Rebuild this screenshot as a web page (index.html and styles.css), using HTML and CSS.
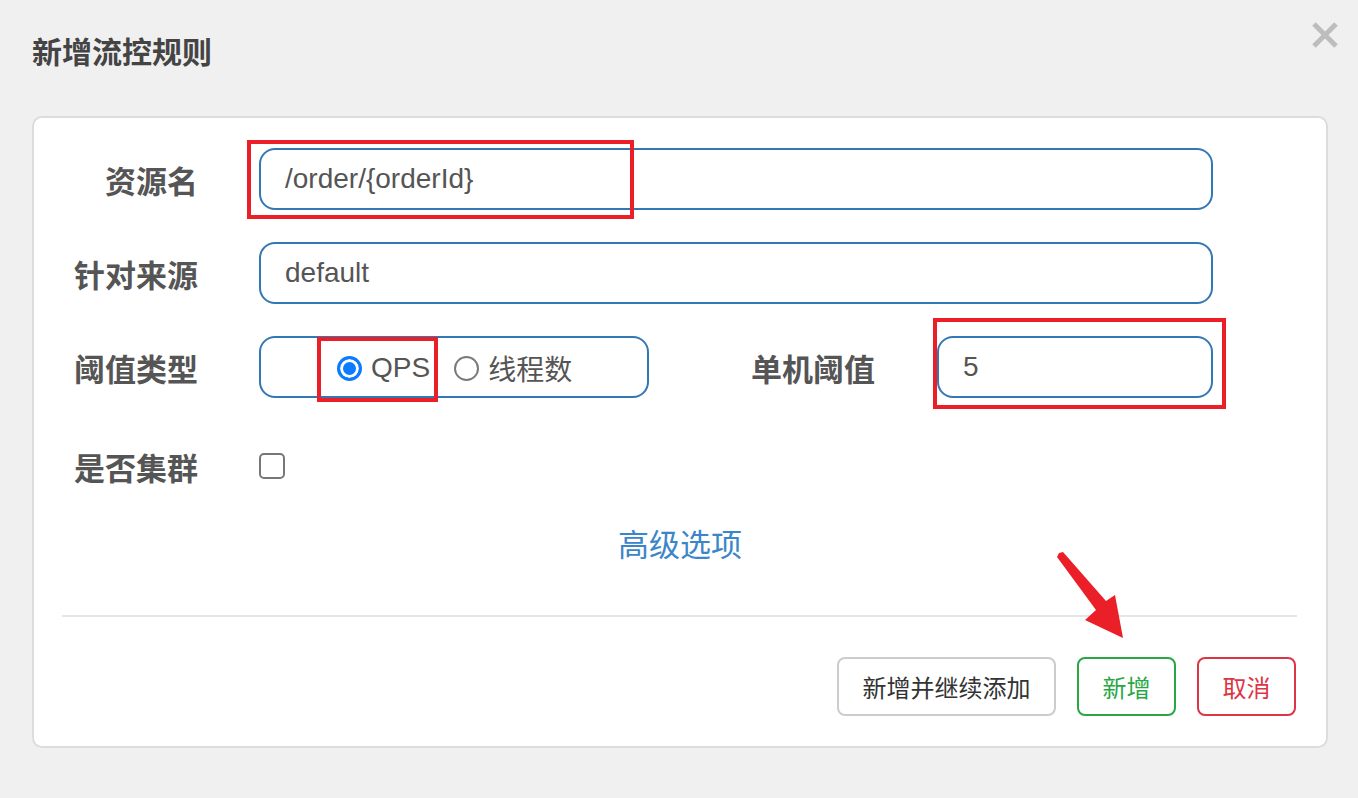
FILE: index.html
```html
<!DOCTYPE html>
<html lang="zh-CN">
<head>
<meta charset="UTF-8" />
<title>新增流控规则</title>
<link rel="stylesheet" href="styles.css">
</head>
<body>

<div class="modal">
  <div class="modal-header">
    <h2 class="modal-title">新增流控规则</h2>
    <span class="close" aria-label="关闭">
      <svg width="28" height="28" viewBox="0 0 28 28">
        <path d="M3 3 L25 25 M25 3 L3 25" stroke="#bdbdbd" stroke-width="5" fill="none"/>
      </svg>
    </span>
  </div>

  <div class="card">
    <div class="form">
      <div class="row">
        <label class="label">资源名</label>
        <div class="input">/order/{orderId}</div>
      </div>
      <div class="row">
        <label class="label">针对来源</label>
        <div class="input">default</div>
      </div>
      <div class="row row-type">
        <label class="label">阈值类型</label>
        <div class="radio-box">
          <span class="radio checked"></span><span class="radio-text">QPS</span>
          <span class="radio"></span><span class="radio-text">线程数</span>
        </div>
        <label class="label label-2">单机阈值</label>
        <div class="input input-small">5</div>
      </div>
      <div class="row row-check">
        <label class="label">是否集群</label>
        <span class="checkbox"></span>
      </div>
      <div class="advanced">高级选项</div>
    </div>

    <div class="divider"></div>

    <div class="footer">
      <button class="btn btn-default">新增并继续添加</button>
      <button class="btn btn-success">新增</button>
      <button class="btn btn-danger">取消</button>
    </div>

    <!-- annotations -->
    <div class="mark mark-1"></div>
    <div class="mark mark-2"></div>
    <div class="mark mark-3"></div>
  </div>
</div>

<svg class="arrow" width="1358" height="798" viewBox="0 0 1358 798">
  <polygon points="1059,553 1063,552 1106,601 1115,595 1123,638 1085,620 1096,610 1057,557" fill="#ea1f28"/>
</svg>

</body>
</html>
```

FILE: styles.css
```css
body {
  margin: 0;
  background: #f0f0f0;
  font-family: "Noto Sans CJK SC", "Liberation Sans", sans-serif;
  color: #555;
}
.modal {
  width: 1358px;
  height: 798px;
}
/* En-tête */
.modal-header {
  display: flex;
  justify-content: space-between;
  align-items: flex-start;
  padding: 28px 19px 0 32px;
  height: 88px;
}
.modal-title {
  margin: 0;
  font-size: 30px;
  line-height: 44px;
  font-weight: bold;
  color: #444;
}
.close {
  margin-top: -7px;
  width: 28px;
  height: 28px;
}
/* Carte */
.card {
  position: relative;
  margin: 0 30px 0 32px;
  background: #fff;
  border: 2px solid #dcdcdc;
  border-radius: 10px;
  height: 628px;
}
.form {
  padding-top: 30px;
}
.row {
  display: flex;
  align-items: center;
  height: 62px;
  margin-bottom: 32px;
}
.label {
  width: 164px;
  margin-right: 61px;
  text-align: right;
  font-size: 31px;
  font-weight: bold;
  color: #555;
}
.input {
  box-sizing: border-box;
  width: 954px;
  height: 62px;
  border: 2px solid #3477b5;
  border-radius: 16px;
  padding-left: 24px;
  font-family: "Liberation Sans", Arial, sans-serif;
  font-size: 28px;
  line-height: 58px;
  color: #555;
}
.row-type {
  margin-bottom: 37px;
}
.radio-box {
  box-sizing: border-box;
  display: flex;
  align-items: center;
  width: 390px;
  height: 62px;
  border: 2px solid #3477b5;
  border-radius: 16px;
  padding-left: 76px;
  padding-top: 2px;
}
.radio {
  box-sizing: border-box;
  width: 25px;
  height: 25px;
  border: 2px solid #7a7a7a;
  border-radius: 50%;
  margin-right: 9px;
}
.radio.checked {
  border: 3px solid #0b7bff;
  background: #0b7bff;
  box-shadow: inset 0 0 0 3px #fff;
}
.radio-text {
  font-size: 28px;
  color: #555;
  margin-right: 24px;
  font-family: "Liberation Sans", "Noto Sans CJK SC", sans-serif;
}
.label-2 {
  width: 226px;
  margin-right: 62px;
}
.input-small {
  width: 276px;
}
.row-check {
  margin-bottom: 26px;
}
.checkbox {
  box-sizing: border-box;
  width: 26px;
  height: 26px;
  border: 2px solid #777;
  border-radius: 5px;
}
.advanced {
  text-align: center;
  font-size: 31px;
  line-height: 40px;
  color: #3a86c8;
}
.divider {
  height: 2px;
  background: #e6e6e6;
  margin: 52px 29px 0 28px;
}
.footer {
  display: flex;
  justify-content: flex-end;
  gap: 21px;
  padding: 40px 30px 0 0;
}
.btn {
  box-sizing: border-box;
  height: 59px;
  padding: 0;
  white-space: nowrap;
  text-align: center;
  background: #fff;
  border: 2px solid #ccc;
  border-radius: 8px;
  font-family: "Noto Sans CJK SC", sans-serif;
  font-size: 24px;
  color: #333;
}
.btn-default {
  width: 219px;
}
.btn-success {
  width: 99px;
  border-color: #28a745;
  color: #28a745;
}
.btn-danger {
  width: 99px;
  border-color: #dc3545;
  color: #dc3545;
}
/* Cadres rouges */
.mark {
  position: absolute;
  box-sizing: border-box;
  border: 4px solid #ea1f28;
}
.mark-1 { left: 213px; top: 22px; width: 387px; height: 79px; }
.mark-2 { left: 283px; top: 219px; width: 121px; height: 65px; }
.mark-3 { left: 899px; top: 200px; width: 293px; height: 91px; }
.arrow {
  position: absolute;
  top: 0;
  left: 0;
}
```
